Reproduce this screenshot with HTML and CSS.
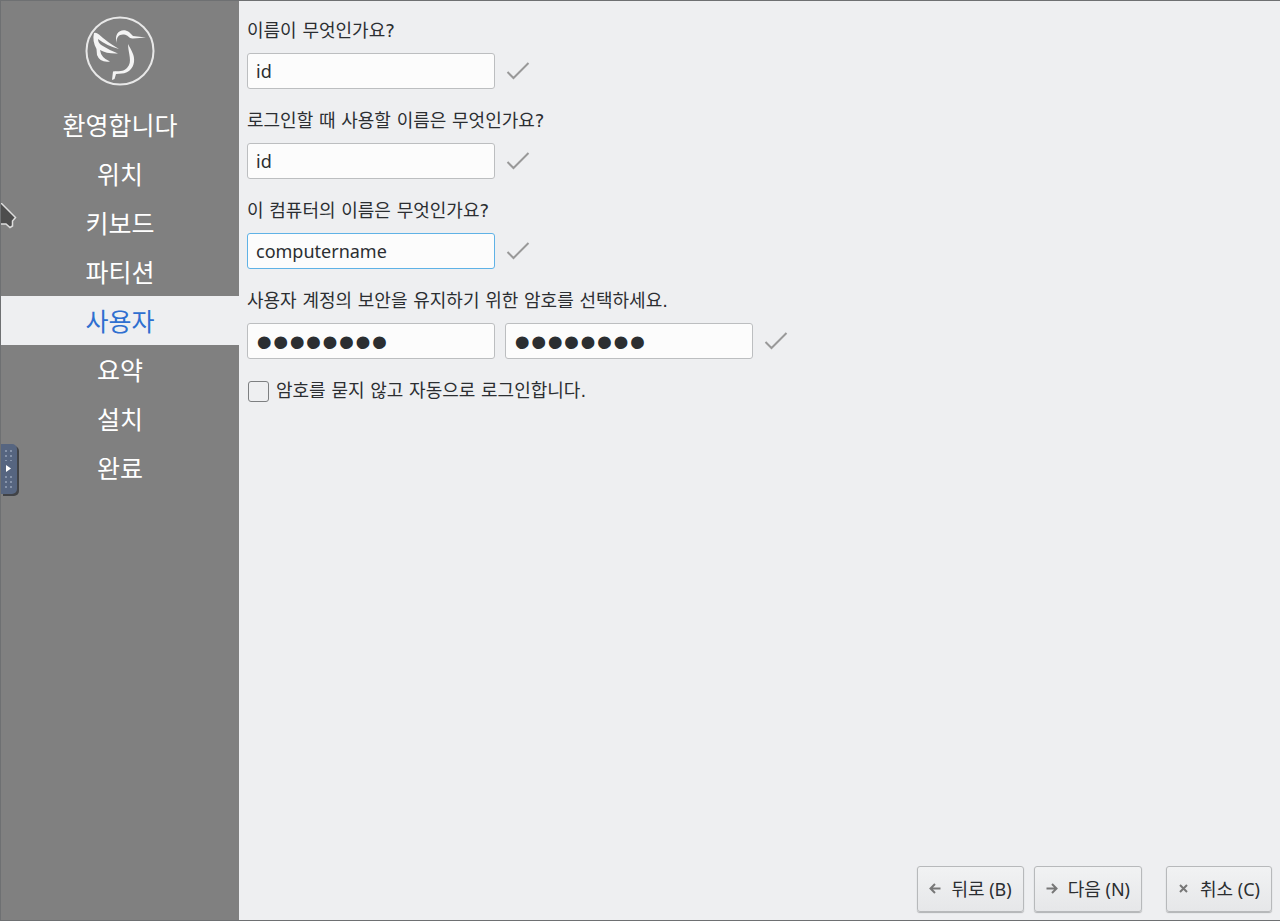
FILE: index.html
```html
<!DOCTYPE html>
<html lang="ko">
  <head>
    <meta charset="UTF-8" />
    <meta name="viewport" content="width=device-width, initial-scale=1.0" />
    <title>Lubuntu</title>
    <link rel="stylesheet" href="styles.css">
  </head>
  <body>
    <svg class="symbols">
      <symbol id="check" viewBox="0 0 24 24">
        <path d="M1.5 13l6 6L22.500 4" />
      </symbol>
    </svg>
    <aside class="sidebar">
      <svg class="logo" viewBox="0 0 70 70" aria-hidden="true">
        <circle cx="35" cy="35" r="33.5" />
        <path class="feather" d="M9 17Q11 16 14 18.500Q22 26 34 33Q22 30 13 23Q13 27 17 29.500Q24 34 33 37.500Q22 38 15 34Q16 42 25 45.500Q15 47 12 39L11.500 33Q7 25 9 17Z" />
        <path class="feather" d="M32 27C28 17 37 11 44 16L48 20L61 21.500L48 22.500C44 23 43 18.500 39 18.500C34 18 31 21 32 27Z" />
        <path class="feather" d="M43 28C46 34 50 39 49 46C48 53 43 57 37 57.500L31 58L29.500 63L27 64L28 55.500C34 55 38 56 42 52C48 46 43 37 43 28Z" />
      </svg>
      <ol class="steps">
        <li>환영합니다</li>
        <li>위치</li>
        <li>키보드</li>
        <li>파티션</li>
        <li class="current" aria-current="step">사용자</li>
        <li>요약</li>
        <li>설치</li>
        <li>완료</li>
      </ol>
    </aside>
    <form class="page">
      <div class="field">
        <label for="full-name">이름이 무엇인가요?</label>
        <div class="row">
          <input class="text" type="text" id="full-name" value="id" />
          <svg class="check"><use href="#check" /></svg>
        </div>
      </div>
      <div class="field">
        <label for="login-name">로그인할 때 사용할 이름은 무엇인가요?</label>
        <div class="row">
          <input class="text" type="text" id="login-name" value="id" />
          <svg class="check"><use href="#check" /></svg>
        </div>
      </div>
      <div class="field">
        <label for="host-name">이 컴퓨터의 이름은 무엇인가요?</label>
        <div class="row">
          <input class="text active" type="text" id="host-name" value="computername" />
          <svg class="check"><use href="#check" /></svg>
        </div>
      </div>
      <div class="field">
        <label for="password">사용자 계정의 보안을 유지하기 위한 암호를 선택하세요.</label>
        <div class="row">
          <input class="text password" type="password" id="password" value="password" />
          <input class="text password" type="password" id="password-repeat" aria-label="암호 확인" value="password" />
          <svg class="check"><use href="#check" /></svg>
        </div>
      </div>
      <div class="auto-login">
        <input type="checkbox" id="auto-login" />
        <label for="auto-login">암호를 묻지 않고 자동으로 로그인합니다.</label>
      </div>
      <div class="buttons">
        <button type="button">
          <svg viewBox="0 0 12 12"><path d="M11.500 5.500H1.500M6 1L1.500 5.500L6 10" /></svg>
          뒤로 (B)
        </button>
        <button type="button">
          <svg viewBox="0 0 12 12"><path d="M.500 5.500H10.500M6 1L10.500 5.500L6 10" /></svg>
          다음 (N)
        </button>
        <button type="button" class="cancel">
          <svg viewBox="0 0 12 12"><path d="M2 2L9 9M9 2L2 9" /></svg>
          취소 (C)
        </button>
      </div>
    </form>
    <svg class="pointer" viewBox="0 0 18 30" aria-hidden="true">
      <path d="M-1 -1L14.500 14.500L11.500 18V23L9 24.500L5 21H-1Z" />
    </svg>
    <button type="button" class="drawer" aria-label="Show panel">
      <svg viewBox="0 0 16 50">
        <path class="dots" d="M5 6V17M10 6V17M5 32V44M10 32V44" />
        <path class="arrow" d="M5 21V28L10 24.500Z" />
      </svg>
    </button>
  </body>
</html>
```
FILE: styles.css
```css
*,
*::before,
*::after {
  box-sizing: border-box;
}

body {
  display: flex;
  min-height: 100vh;
  margin: 0;
  border: 1px solid #6e7072;
  border-width: 1px 0 1px 1px;
  background-color: #eeeff1;
  color: #2b2e31;
  font-family: "Noto Sans", "Noto Sans CJK KR", sans-serif;
  font-size: 18px;
  line-height: 28px;
}

input,
button {
  font: inherit;
  color: inherit;
}

label {
  font-family: "DejaVu Sans", "Noto Sans CJK KR", sans-serif;
}

.symbols {
  display: none;
}

.sidebar {
  flex: none;
  width: 238px;
  padding-top: 15px;
  background-color: #808080;
  color: #fff;
}

.logo {
  display: block;
  width: 70px;
  height: 70px;
  margin: 0 auto 14px;
}

.logo circle {
  fill: none;
  stroke: #e8e8e8;
  stroke-width: 2;
}

.feather {
  fill: #f4f4f4;
}

.steps {
  margin: 0;
  padding: 0;
  list-style: none;
  font-family: "Noto Sans CJK KR", sans-serif;
  font-size: 25px;
  line-height: 49px;
  text-align: center;
}

.current {
  background-color: #eeeff1;
  color: #2f6fd0;
}

.page {
  display: flex;
  flex: 1;
  flex-direction: column;
  padding: 16px 8px 8px;
}

.field {
  margin-bottom: 18px;
}

.field label {
  display: block;
  margin-bottom: 8px;
}

.row {
  display: flex;
  align-items: center;
  gap: 10px;
}

.text {
  width: 248px;
  height: 36px;
  padding: 0 8px;
  border: 1px solid #bcbec0;
  border-radius: 3px;
  background-color: #fcfcfc;
}

.active {
  border-color: #5fb2e6;
}

.password {
  font-family: "Liberation Sans", sans-serif;
  font-size: 47px;
}

.check {
  width: 24px;
  height: 24px;
  margin-left: 1px;
  fill: none;
  stroke: #999;
  stroke-width: 2;
}

.auto-login {
  display: flex;
  align-items: center;
  gap: 7px;
}

.auto-login input {
  appearance: none;
  width: 21px;
  height: 21px;
  margin: 0 0 0 1px;
  border: 1px solid #7d7f81;
  border-radius: 3px;
}

.buttons {
  display: flex;
  justify-content: flex-end;
  gap: 10px;
  margin-top: auto;
}

.buttons button {
  display: flex;
  align-items: center;
  gap: 10px;
  height: 46px;
  padding: 0 11px;
  border: 1px solid #b7b9bb;
  border-radius: 3px;
  background: linear-gradient(#f1f2f3, #e6e7e9);
  box-shadow: 0 1px 1px #b0b2b4;
}

.buttons svg {
  width: 12px;
  height: 12px;
  fill: none;
  stroke: #777;
  stroke-width: 2;
}

.buttons .cancel {
  margin-left: 14px;
}

.pointer {
  position: absolute;
  top: 203px;
  left: 1px;
  width: 18px;
  height: 30px;
  fill: #4d4d4d;
  stroke: #ddd;
  stroke-width: 1.5;
}

.drawer {
  position: absolute;
  top: 444px;
  left: 1px;
  width: 16px;
  height: 50px;
  padding: 0;
  border: 0;
  border-radius: 0 5px 5px 0;
  background-color: #566580;
  box-shadow: 2px 2px 0 #414347;
}

.drawer svg {
  display: block;
}

.dots {
  stroke: #8693aa;
  stroke-width: 2;
  stroke-dasharray: 2 3;
}

.arrow {
  fill: #fff;
}
```
